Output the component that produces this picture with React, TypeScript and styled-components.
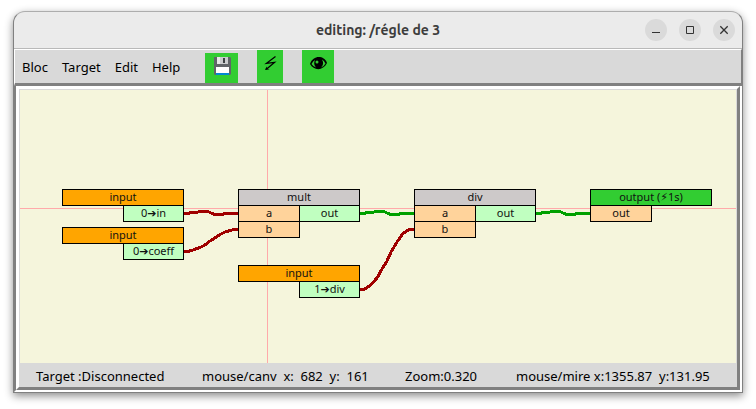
import React from "react";
import styled, { createGlobalStyle } from "styled-components";

const Global = createGlobalStyle`
  * { box-sizing: border-box; }
  html, body { margin: 0; background: #fff; }
  body, button { font-family: "Noto Sans", "DejaVu Sans", sans-serif; color: #000; }
`;

const Page = styled.div`
  min-height: 100vh;
  display: flex;
  padding: 11px 13px 16px;
`;

const Frame = styled.main`
  flex: 1;
  min-width: 0;
  display: flex;
  flex-direction: column;
  border: 1px solid #808080;
  border-top-color: #adadad;
  border-radius: 12px 12px 0 0;
  overflow: hidden;
  background: #ebebeb;
  box-shadow: 0 3px 9px rgba(0, 0, 0, 0.45);
`;

const TitleBar = styled.header`
  height: 37px;
  display: grid;
  grid-template-columns: 1fr auto 1fr;
  align-items: center;
  border-bottom: 1px solid #b9b9b9;
  padding: 0 7px;
`;

const Title = styled.h1`
  grid-column: 2;
  margin: 0;
  font: 600 14px/20px Ubuntu, "Open Sans", sans-serif;
  color: #3d3d3d;
`;

const WindowButtons = styled.div`
  display: flex;
  justify-content: flex-end;
  gap: 12px;
`;

const RoundButton = styled.button`
  width: 22px;
  height: 22px;
  padding: 0;
  border: 0;
  border-radius: 50%;
  background: #dadada;
  svg { display: block; }
`;

const ToolBar = styled.div`
  height: 37px;
  display: flex;
  align-items: flex-end;
  background: #d9d9d9;
  border: 1px solid #fff;
  border-right-color: #808080;
  border-bottom: 3px solid #808080;
`;

const Menu = styled.nav`
  align-self: center;
  display: flex;
  gap: 14px;
  width: 190px;
  padding-left: 7px;
`;

const MenuButton = styled.button`
  padding: 0;
  border: 0;
  background: none;
  font-size: 13px;
  line-height: 18px;
`;

const Tools = styled.div`
  display: flex;
  align-items: flex-end;
  gap: 19px;
`;

const Tool = styled.button<{ $w: number; $h: number }>`
  width: ${(p) => p.$w}px;
  height: ${(p) => p.$h}px;
  padding: 0;
  border: 0;
  background: #32cd32;
  svg { display: block; }
`;

const Outer = styled.div`
  flex: 1;
  display: flex;
  border-style: solid;
  border-width: 0 2px 2px;
  border-color: #808080 #fff #fff #808080;
`;

const Inner = styled.div`
  flex: 1;
  min-width: 0;
  display: flex;
  flex-direction: column;
  border: 3px solid;
  border-color: #fff #808080 #808080 #fff;
  background: #d9d9d9;
`;

const Canvas = styled.section`
  flex: 1;
  position: relative;
  margin: 1px 1px 0;
  background: #f5f5dc;
  overflow: hidden;
`;

const Guide = styled.div<{ $vertical?: boolean }>`
  position: absolute;
  background: #ffaaaa;
  ${(p) => (p.$vertical ? "left: 247px; top: 0; bottom: 0; width: 1px;" : "top: 118px; left: 0; right: 0; height: 1px;")}
`;

const Wires = styled.svg`
  position: absolute;
  left: 0;
  top: 0;
  width: 100%;
  height: 100%;
  fill: none;
  stroke-width: 3;
  shape-rendering: crispEdges;
`;

const Node = styled.article<{ $x: number; $y: number }>`
  position: absolute;
  left: ${(p) => p.$x}px;
  top: ${(p) => p.$y}px;
  width: 122px;
  font-size: 11px;
  line-height: 13px;
  text-align: center;
  color: #111;
`;

const NodeHead = styled.div<{ $color: string }>`
  padding-bottom: 2px;
  border: 1px solid #000;
  background: ${(p) => p.$color};
`;

const Ports = styled.div`
  display: flex;
  align-items: flex-start;
  margin-top: -1px;
`;

const PortColumn = styled.div<{ $out?: boolean }>`
  width: ${(p) => (p.$out ? 61 : 62)}px;
  margin-left: ${(p) => (p.$out ? "auto" : "0")};
  & + & { margin-left: -1px; }
`;

const Port = styled.div<{ $out?: boolean }>`
  padding-bottom: 2px;
  border: 1px solid #000;
  background: ${(p) => (p.$out ? "#c0ffc0" : "#ffd39b")};
  & + & { margin-top: -1px; }
`;

const StatusBar = styled.footer`
  height: 24px;
  display: grid;
  grid-template-columns: 166fr 203fr 111fr 205fr;
  align-items: center;
  padding: 2px 16px 0 17px;
  font-size: 13px;
  line-height: 18px;
  white-space: pre;
`;

type NodeData = { title: string; color: string; x: number; y: number; ins: string[]; outs: string[] };

const nodes: NodeData[] = [
  { title: "input", color: "#ffa500", x: 42, y: 99, ins: [], outs: ["0➔in"] },
  { title: "input", color: "#ffa500", x: 42, y: 137, ins: [], outs: ["0➔coeff"] },
  { title: "mult", color: "#cdc9c9", x: 218, y: 99, ins: ["a", "b"], outs: ["out"] },
  { title: "input", color: "#ffa500", x: 218, y: 175, ins: [], outs: ["1➔div"] },
  { title: "div", color: "#cdc9c9", x: 394, y: 99, ins: ["a", "b"], outs: ["out"] },
  { title: "output (⚡1s)", color: "#32cd32", x: 570, y: 99, ins: ["out"], outs: [] },
];

const ripple = "l4 0 l3 -1 h5 l4 -1 h8 l4 2 l3 1 h7 l3 -1 h13";

const wires = [
  { color: "#a00000", d: `M164 123.5 ${ripple}` },
  { color: "#00a000", d: `M340 123.5 ${ripple}` },
  { color: "#00a000", d: `M516 123.5 ${ripple}` },
  { color: "#a00000", d: "M164 161.5 H168 L173 160 L180 157.5 L185 155 L190 151 L195 148 L200 144.5 L205 142 L212 140 L218 139.5" },
  { color: "#a00000", d: "M340 199.5 H344 L350 195.5 L357 188 L362 179 L367 171 L371 162 L377 152 L383 143.5 L389 139.5 H394" },
];

const BlockNode = ({ node }: { node: NodeData }) => (
  <Node $x={node.x} $y={node.y}>
    <NodeHead $color={node.color}>{node.title}</NodeHead>
    <Ports>
      {node.ins.length > 0 && (
        <PortColumn>{node.ins.map((p) => <Port key={p}>{p}</Port>)}</PortColumn>
      )}
      {node.outs.length > 0 && (
        <PortColumn $out>{node.outs.map((p) => <Port key={p} $out>{p}</Port>)}</PortColumn>
      )}
    </Ports>
  </Node>
);

export default function App() {
  return (
    <>
      <Global />
      <Page>
        <Frame>
          <TitleBar>
            <Title>editing: /régle de 3</Title>
            <WindowButtons>
              <RoundButton aria-label="Minimize">
                <svg width="22" height="22"><path d="M7 13.5h8" stroke="#333" /></svg>
              </RoundButton>
              <RoundButton aria-label="Maximize">
                <svg width="22" height="22"><path d="M7.5 7.5h7v7h-7z" fill="none" stroke="#333" /></svg>
              </RoundButton>
              <RoundButton aria-label="Close">
                <svg width="22" height="22"><path d="M7.3 7.3l7.4 7.4M14.7 7.3l-7.4 7.4" stroke="#333" strokeWidth="1.3" /></svg>
              </RoundButton>
            </WindowButtons>
          </TitleBar>
          <ToolBar>
            <Menu>
              {["Bloc", "Target", "Edit", "Help"].map((m) => <MenuButton key={m}>{m}</MenuButton>)}
            </Menu>
            <Tools>
              <Tool $w={33} $h={30} aria-label="Save">
                <svg width="33" height="30">
                  <path d="M9 4h16l1 1v16l-1 1H10l-1-1z" fill="#606468" />
                  <path d="M12 4h11v7H12z" fill="#c9cbcd" />
                  <path d="M12 4h3v7h-3z" fill="#e8e8e8" />
                  <path d="M18 5h2v5h-2z" fill="#3c4043" />
                  <path d="M11 14h13v7H11z" fill="#fff" />
                  <path d="M11 20h13v2H11z" fill="#0288d1" />
                </svg>
              </Tool>
              <Tool $w={26} $h={33} aria-label="Run">
                <svg width="26" height="33">
                  <path d="M18.500 6.500L9.500 13.300L17.500 12.400L9.300 19.200" fill="none" stroke="#000" strokeWidth="1.3" />
                  <path d="M8 20l1.500-3.500.6 2 2.500.8z" fill="#000" />
                </svg>
              </Tool>
              <Tool $w={32} $h={33} aria-label="Show">
                <svg width="32" height="33">
                  <path d="M8 14C11 5 22 5 25 13C21 21 12 21 8 14z" fill="#000" />
                  <path d="M9.500 14Q11 11 13 10Q11 14 14 17.500Q11 16.500 9.500 14zM23.500 13.500Q22 10.500 20 9.500Q22.500 14 19 17.500Q22 16.500 23.500 13.500z" fill="#32cd32" />
                  <circle cx="15" cy="12" r="1.500" fill="#32cd32" />
                </svg>
              </Tool>
            </Tools>
          </ToolBar>
          <Outer>
            <Inner>
              <Canvas>
                <Guide />
                <Guide $vertical />
                <Wires>
                  {wires.map((w) => <path key={w.d} d={w.d} stroke={w.color} />)}
                </Wires>
                {nodes.map((n) => <BlockNode key={`${n.x}-${n.y}`} node={n} />)}
              </Canvas>
              <StatusBar>
                <span>Target :Disconnected</span>
                <span>{"mouse/canv  x:  682  y:  161"}</span>
                <span>Zoom:0.320</span>
                <span>{"mouse/mire x:1355.87  y:131.95"}</span>
              </StatusBar>
            </Inner>
          </Outer>
        </Frame>
      </Page>
    </>
  );
}
